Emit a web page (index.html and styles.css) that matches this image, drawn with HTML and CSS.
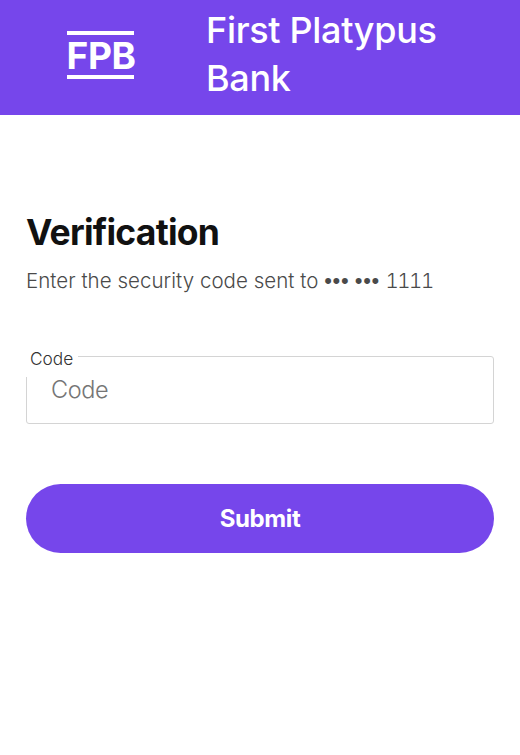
FILE: index.html
```html
<!DOCTYPE html>
<html lang="en">
<head>
<meta charset="utf-8">
<title>First Platypus Bank</title>
<link rel="stylesheet" href="styles.css">
</head>
<body>
<header class="header">
  <div class="logo">FPB</div>
  <div class="bank-name">First Platypus<br>Bank</div>
</header>
<main class="content">
  <h1 class="title">Verification</h1>
  <p class="subtitle">Enter the security code sent to <span class="dots">•••</span> <span class="dots">•••</span> <span class="digits">1111</span></p>
  <form class="form">
    <div class="field">
      <label class="label" for="code">Code</label>
      <input class="input" id="code" type="text" placeholder="Code">
    </div>
    <button class="submit" type="button">Submit</button>
  </form>
</main>
</body>
</html>
```
FILE: styles.css
```css
* { box-sizing: border-box; }
body {
  margin: 0;
  background: #fff;
  color: #111;
  font-family: Inter, "Liberation Sans", sans-serif;
}
.header {
  display: flex;
  align-items: flex-start;
  height: 115px;
  padding-left: 67px;
  background: #7646eb;
  color: #fff;
}
.logo {
  width: 67px;
  height: 48px;
  margin-top: 31px;
  border-top: 4px solid #fff;
  border-bottom: 4px solid #fff;
  font-size: 37px;
  font-weight: 650;
  line-height: 42px;
  letter-spacing: -0.3px;
  text-indent: -0.5px;
  white-space: nowrap;
}
.bank-name {
  margin: 6px 0 0 72px;
  font-size: 36px;
  font-weight: 550;
  line-height: 48px;
  letter-spacing: -0.32px;
  white-space: nowrap;
}
.content { padding: 94px 26px 0; }
.title {
  margin: 0;
  font-size: 35.5px;
  font-weight: 700;
  line-height: 48px;
  letter-spacing: -0.75px;
}
.subtitle {
  margin: 9px 0 0;
  color: #4a4a4a;
  font-size: 20.5px;
  font-weight: 300;
  line-height: 30px;
  letter-spacing: 0.04px;
  white-space: nowrap;
}
.dots {
  font-family: "Liberation Sans", sans-serif;
  font-size: 22px;
  line-height: 20px;
  letter-spacing: 0.6px;
  margin-right: -0.2px;
}
.digits {
  font-feature-settings: "tnum" 1;
  letter-spacing: -1.4px;
}
.form { margin-top: 60px; }
.field {
  position: relative;
  height: 68px;
}
.label {
  position: absolute;
  top: -7px;
  left: 0;
  padding: 0 5px 0 4px;
  height: 28px;
  background: #fff;
  color: #333;
  font-size: 17.3px;
  font-weight: 300;
  line-height: 20px;
}
.input {
  display: block;
  width: 100%;
  height: 68px;
  padding: 0 24px 2px;
  border: 1px solid #d4d4d4;
  border-radius: 3px;
  background: #fff;
  font: 300 23.5px/32px Inter, "Liberation Sans", sans-serif;
  letter-spacing: -0.4px;
}
.input::placeholder { color: #757575; opacity: 1; }
.submit {
  display: block;
  width: 100%;
  height: 69px;
  margin-top: 60px;
  padding: 0;
  border: 0;
  border-radius: 35px;
  background: #7646eb;
  color: #fff;
  font: 700 24px/32px Inter, "Liberation Sans", sans-serif;
  letter-spacing: -0.4px;
}
```
